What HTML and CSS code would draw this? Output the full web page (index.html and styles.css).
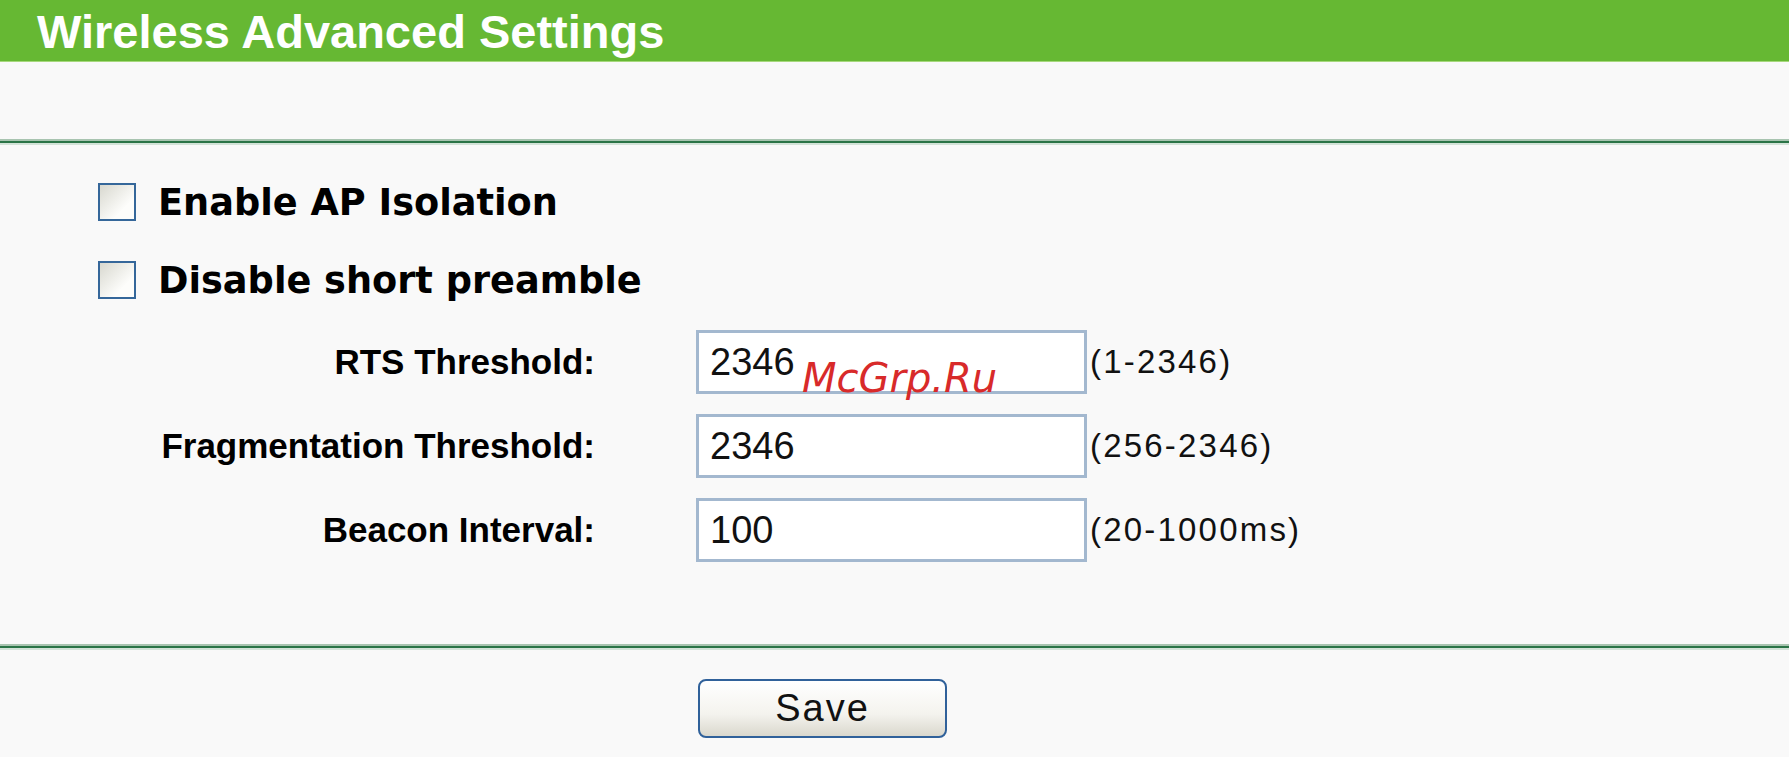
FILE: index.html
```html
<!DOCTYPE html>
<html lang="en">

<head>
    <meta charset="UTF-8">
    <title>Wireless Advanced Settings</title>
    <link rel="stylesheet" href="styles.css">
</head>

<body>
    <div class="header">Wireless Advanced Settings</div>

    <div class="divider top-divider"></div>

    <div class="options">
        <label class="option">
            <span class="check"></span>
            <span class="option-text">Enable AP Isolation</span>
        </label>
        <label class="option">
            <span class="check"></span>
            <span class="option-text">Disable short preamble</span>
        </label>
    </div>

    <form class="fields">
        <div class="field">
            <label class="field-label" for="rts">RTS Threshold:</label>
            <input type="text" id="rts" value="2346">
            <span class="range">(1-2346)</span>
        </div>
        <div class="field">
            <label class="field-label" for="frag">Fragmentation Threshold:</label>
            <input type="text" id="frag" value="2346">
            <span class="range">(256-2346)</span>
        </div>
        <div class="field">
            <label class="field-label" for="beacon">Beacon Interval:</label>
            <input type="text" id="beacon" value="100">
            <span class="range">(20-1000ms)</span>
        </div>
    </form>

    <div class="divider bottom-divider"></div>

    <div class="actions">
        <button type="button" class="save">Save</button>
    </div>

    <div class="watermark">McGrp.Ru</div>
</body>

</html>
```

FILE: styles.css
```css
body {
    margin: 0;
    background: #f9f9f9;
    font-family: "Liberation Sans", Arial, sans-serif;
    color: #000;
    position: relative;
}

/* green title bar */
.header {
    height: 61px;
    line-height: 63px;
    background: #66b833;
    border-bottom: 1px solid #a6d87c;
    color: #ffffff;
    font-weight: bold;
    font-size: 47px;
    padding-left: 37px;
}

.divider {
    height: 2px;
    background: #2b7447;
    box-shadow: 0 -2px 0 #a8c4b0, 0 2px 0 #d3e3d8;
}

.top-divider {
    margin-top: 79px;
}

.options {
    margin-top: 39px;
    padding-left: 98px;
    display: flex;
    flex-direction: column;
    gap: 38px;
}

.option {
    display: flex;
    align-items: center;
    height: 40px;
    gap: 22px;
}

.check {
    width: 34px;
    height: 34px;
    border: 2px solid #35679a;
    background: linear-gradient(135deg, #d8d8cf, #fdfdfb 70%);
}

.option-text {
    font-family: "DejaVu Sans", Verdana, sans-serif;
    font-weight: bold;
    font-size: 36.7px;
}

.fields {
    margin: 30px 0 0;
    display: flex;
    flex-direction: column;
    gap: 20px;
}

.field {
    display: flex;
    align-items: center;
    height: 64px;
}

.field-label {
    width: 595px;
    text-align: right;
    font-weight: bold;
    font-size: 35px;
    margin-right: 101px;
}

.field input {
    width: 391px;
    height: 64px;
    box-sizing: border-box;
    border: 3px solid #a3b8cf;
    background: #ffffff;
    padding: 0 11px;
    font-family: "Liberation Sans", Arial, sans-serif;
    font-size: 38px;
    color: #111;
    outline: none;
}

.range {
    margin-left: 3px;
    font-size: 33px;
    letter-spacing: 2.2px;
    color: #111;
}

.bottom-divider {
    margin-top: 84px;
}

.actions {
    padding: 31px 0 0 698px;
}

.save {
    width: 249px;
    height: 59px;
    border: 2px solid #30619a;
    border-radius: 8px;
    background: linear-gradient(to bottom, #ffffff, #f4f3ee 60%, #dad8cd);
    font-family: "Liberation Sans", Arial, sans-serif;
    font-size: 38px;
    letter-spacing: 2px;
    color: #111;
    padding: 0;
}

/* red watermark laid over the first input */
.watermark {
    position: absolute;
    left: 802px;
    top: 355px;
    font-family: "DejaVu Sans", sans-serif;
    font-style: italic;
    font-size: 40px;
    color: #d82a2a;
}
```
